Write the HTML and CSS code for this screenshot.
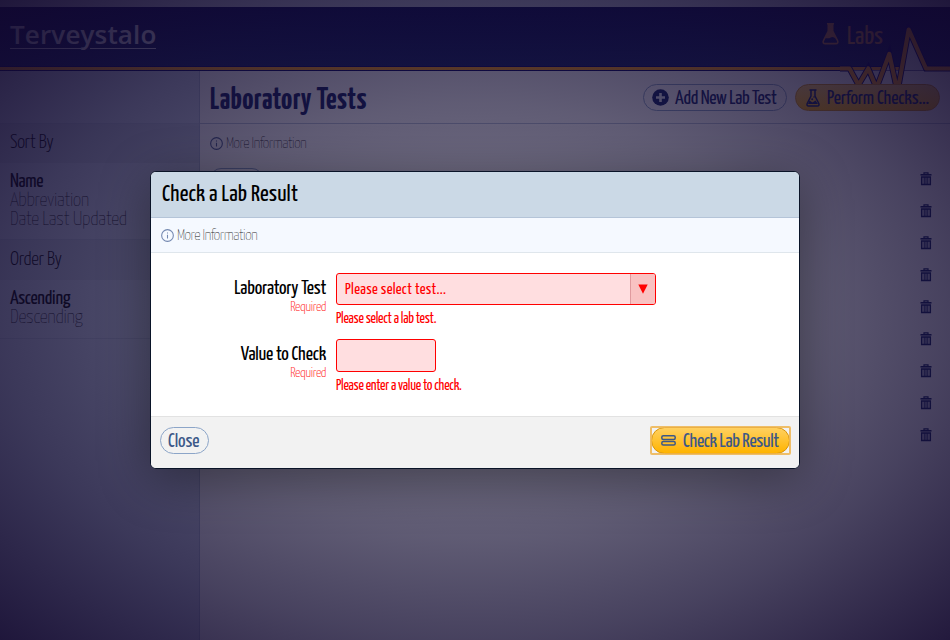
FILE: index.html
```
<!DOCTYPE html>
<html lang="en">
<head>
<meta charset="utf-8">
<title>Laboratory Tests</title>
<link rel="stylesheet" href="styles.css">
</head>
<body>
<svg class="defs" width="0" height="0" aria-hidden="true">
  <symbol id="info" viewBox="0 0 12 12"><circle cx="6" cy="6" r="5.4" fill="none" stroke="currentColor" stroke-width="1"/><path d="M6 5.2V8.700M6 3.200v1" stroke="currentColor" stroke-width="1"/></symbol>
  <symbol id="trash" viewBox="0 0 12 14"><path d="M4 2V.8h4V2" fill="none" stroke="currentColor" stroke-width="1.2"/><path d="M.5 2h11v1.6H.5z" fill="currentColor"/><path d="M1.700 4.900h8.600v7.500H1.700z" fill="none" stroke="currentColor" stroke-width="1.500"/><path d="M4.200 5v7M6 5v7M7.800 5v7" stroke="currentColor" stroke-width="1.100"/></symbol>
</svg>

<div class="page">
  <div class="strip"></div>
  <header class="top">
    <div class="logo">Terveystalo</div>
    <div class="section">
      <svg width="17" height="22" viewBox="0 0 17 22"><path d="M5 .7h7M6.3 1v7.2L1.6 17.3Q.2 20.6 3.4 20.6h10.2q3.2 0 1.8-3.3L10.7 8.2V1" fill="none" stroke="currentColor" stroke-width="1.6"/><path d="M6.3 1h4.4v7.4l3.4 7.3q-3.2-2.6-5.4-1.2-2.2 1.500-5.800.4l3.400-6.500z" fill="currentColor"/></svg>
      <span>Labs</span>
    </div>
    <svg class="pulse" width="110" height="70" viewBox="840 24 110 70">
      <path class="pulse-fill" d="M849 70.500L858 86L868 68L877 87L889 54L898 90L908.500 30L926 70.500Z"/>
      <path class="pulse-edge" d="M838 68.500H849.500L858.500 85L868.300 68.500L876.500 88L889.300 54L897.500 92L908.700 29.500L926 68.500H952"/>
      <path class="pulse-line" d="M838 68.500H849.500L858.500 85L868.300 68.500L876.500 88L889.300 54L897.500 92L908.700 29.500L926 68.500H952"/>
    </svg>
  </header>

  <div class="columns">
    <aside class="side">
      <div class="side-blank"></div>
      <h3>Sort By</h3>
      <ul><li class="on">Name</li><li>Abbreviation</li><li>Date Last Updated</li></ul>
      <h3 class="second">Order By</h3>
      <ul><li class="on">Ascending</li><li>Descending</li></ul>
    </aside>
    <main class="main">
      <div class="titlebar">
        <h1>Laboratory Tests</h1>
        <button class="pill add"><svg width="17" height="17" viewBox="0 0 17 17"><circle cx="8.500" cy="8.500" r="8.300" fill="currentColor"/><path d="M8.500 4v9M4 8.500h9" stroke="#e4e9f2" stroke-width="2.600"/></svg><span>Add New Lab Test</span></button>
        <button class="pill gold perform"><svg width="14" height="18" viewBox="0 0 14 18"><path d="M3.500 1h7M5 1v6L1.200 14.500Q.4 16.900 2.600 16.900h8.800q2.200 0 1.400-2.400L9 7V1" fill="none" stroke="currentColor" stroke-width="1.500"/><path d="M3.500 11.500l3 2 3-2 2.500 3.500h-10z" fill="currentColor"/><circle cx="6.200" cy="10.200" r="1" fill="currentColor"/><circle cx="8" cy="8" r=".8" fill="currentColor"/></svg><span>Perform Checks...</span></button>
      </div>
      <div class="more"><svg width="13" height="13"><use href="#info"/></svg><span>More Information</span></div>
      <div class="list">
        <div class="row"><span class="tag"></span><svg width="12" height="14"><use href="#trash"/></svg></div>
        <div class="row"><svg width="12" height="14"><use href="#trash"/></svg></div>
        <div class="row"><svg width="12" height="14"><use href="#trash"/></svg></div>
        <div class="row"><svg width="12" height="14"><use href="#trash"/></svg></div>
        <div class="row"><svg width="12" height="14"><use href="#trash"/></svg></div>
        <div class="row"><svg width="12" height="14"><use href="#trash"/></svg></div>
        <div class="row"><svg width="12" height="14"><use href="#trash"/></svg></div>
        <div class="row"><svg width="12" height="14"><use href="#trash"/></svg></div>
        <div class="row"><svg width="12" height="14"><use href="#trash"/></svg></div>
      </div>
    </main>
  </div>
</div>

<div class="overlay">
  <section class="modal" role="dialog">
    <h2>Check a Lab Result</h2>
    <div class="modal-more"><svg width="13" height="13"><use href="#info"/></svg><span>More Information</span></div>
    <div class="form">
      <div class="field">
        <div class="label"><label>Laboratory Test</label><small>Required</small></div>
        <div>
          <div class="select"><span>Please select test...</span><i><svg width="10" height="10" viewBox="0 0 10 10"><path d="M.3.500h9.400L5 9.700z" fill="#f00"/></svg></i></div>
          <p class="error">Please select a lab test.</p>
        </div>
      </div>
      <div class="field">
        <div class="label"><label>Value to Check</label><small>Required</small></div>
        <div>
          <div class="input"></div>
          <p class="error">Please enter a value to check.</p>
        </div>
      </div>
    </div>
    <footer>
      <button class="pill close"><span>Close</span></button>
      <button class="pill gold check"><svg width="15" height="11" viewBox="0 0 15 11"><rect x=".8" y=".8" width="13.400" height="3.600" rx="1.500" fill="none" stroke="currentColor" stroke-width="1.500"/><rect x=".8" y="6.500" width="13.400" height="3.600" rx="1.500" fill="none" stroke="currentColor" stroke-width="1.500"/></svg><span>Check Lab Result</span></button>
    </footer>
  </section>
</div>
</body>
</html>
```
FILE: styles.css
```
* { box-sizing: border-box; }
body {
  margin: 0;
  height: 640px;
  overflow: hidden;
  font-family: "Yanone Kaffeesatz", "Open Sans", sans-serif;
  font-stretch: 75%;
  color: #000;
}
h1, h2, h3, p, ul { margin: 0; padding: 0; }
ul { list-style: none; }
svg { display: block; flex: none; }
.defs { position: absolute; }

.page { height: 640px; display: flex; flex-direction: column; background: #fff; }
.strip { height: 7px; background: #cdd5e4; }
.top {
  position: relative;
  height: 64px;
  display: flex;
  justify-content: space-between;
  padding: 0 67px 0 10px;
  background: linear-gradient(#000452, #101e62) 0 0 / 100% 59px no-repeat, linear-gradient(#000060 0 1px, #ffa010 1px 4px, #000060 4px) 0 59px / 100% 5px no-repeat;
}
.logo {
  align-self: flex-start;
  margin-top: 13px;
  height: 29px;
  width: 146px;
  font: 600 26px/29px "Open Sans", sans-serif;
  letter-spacing: .15px;
  color: #dde0ee;
  background: linear-gradient(90deg, #d4d8ea 71px, transparent 71px 80px, #d4d8ea 80px) 0 100% / 100% 1px no-repeat;
}
.section { display: flex; gap: 8px; padding-top: 16px; color: #c8803c; font-size: 26px; font-weight: 400; line-height: 28px; letter-spacing: -.1px; }
.pulse { position: absolute; right: 0; top: 17px; }
.pulse-fill { fill: #e6ebf4; }
.pulse-edge { fill: none; stroke: #000060; stroke-width: 6; }
.pulse-line { fill: none; stroke: #ffa010; stroke-width: 4.200; stroke-linejoin: round; }

.columns { flex: 1; display: flex; }
.side { width: 200px; background: #c8d2e6; border-right: 1px solid #a9b6cf; font-size: 20px; font-weight: 200; letter-spacing: -.35px; }
.side-blank { height: 53px; border-bottom: 1px solid #b4c0d6; }
.side h3 { height: 39px; padding: 8px 10px 0; background: #bcc6d9; font-size: 20px; font-weight: 300; line-height: 22px; }
.side .second { height: 40px; padding-top: 9px; }
.side ul { padding: 9px 10px 10px; border-bottom: 1px solid #b4c0d6; background: #c8d2e6; }
.side ul:last-child { padding-bottom: 11px; }
.side li { line-height: 19px; height: 19px; color: #111; }
.side li.on { font-weight: 400; color: #000; }

.main { flex: 1; background: #fff; }
.titlebar { height: 53px; display: flex; align-items: flex-start; padding: 13px 10px 0; border-bottom: 1px solid #b8c4d8; }
h1 { flex: 1; font-size: 31px; font-weight: 700; line-height: 33px; color: #0f1a60; letter-spacing: .4px; }
.pill {
  height: 27px;
  display: flex;
  align-items: center;
  border: 1px solid #8ca5c8;
  border-radius: 14px;
  background: transparent;
  padding: 0;
  font: 400 20px/25px "Yanone Kaffeesatz", "Open Sans", sans-serif;
  letter-spacing: -.36px;
  color: #3c5888;
  white-space: nowrap;
}
.pill span { padding-top: 1px; }
.gold { background: linear-gradient(#ffd060, #ffb400); border-color: #d89510; }
.add { position: relative; width: 144px; padding-left: 8px; gap: 6px; margin-right: 8px; color: #0f2068; }
.perform { position: relative; width: 145px; padding-left: 10px; gap: 7px; color: #0f2068; letter-spacing: -.16px; }
.more, .modal-more { display: flex; align-items: center; font-size: 16px; font-weight: 200; letter-spacing: -.55px; color: #222; }
.more { height: 39px; padding-left: 10px; gap: 3px; }
.more svg, .modal-more svg { color: #7388b0; }
.more svg { color: #4a5f90; }
.modal-more span { padding-top: 1px; }
.row { height: 32px; display: flex; align-items: center; justify-content: flex-end; padding-right: 18px; color: #0c1c60; }
.tag { width: 53px; height: 22px; margin: 0 auto 0 10px; border: 1px solid #8ca5c8; border-radius: 11px; }

.overlay {
  position: absolute;
  inset: 0;
  height: 640px;
  display: flex;
  justify-content: center;
  padding-top: 171px;
  background: radial-gradient(ellipse farthest-corner, rgba(20, 14, 50, .52), rgba(20, 14, 50, .68) 48%, rgba(20, 13, 50, .78) 70%, rgba(18, 8, 46, .93));
}
.modal {
  width: 650px;
  height: 298px;
  border: 1px solid #0a1428;
  border-radius: 6px;
  overflow: hidden;
  background: #fff;
  box-shadow: 0 10px 50px rgba(0, 0, 0, .4);
  display: flex;
  flex-direction: column;
}
h2 { height: 46px; padding: 9px 11px 0; background: #cbd9e6; border-bottom: 1px solid #b4c4d8; font-size: 24px; font-weight: 400; line-height: 27px; letter-spacing: .1px; }
.modal-more { height: 35px; padding-left: 10px; gap: 3px; background: #f5f9ff; border-bottom: 1px solid #dfe6ec; }
.form { flex: 1; padding: 20px 0 0; }
.field { display: grid; grid-template-columns: 175px 1fr; column-gap: 10px; height: 66px; }
.label { text-align: right; padding-top: 5px; }
.label label { display: block; font-size: 20px; line-height: 21px; letter-spacing: -.22px; }
.label small { display: block; font-size: 14px; line-height: 17px; font-weight: 300; letter-spacing: -.45px; color: #ff3838; }
.select, .input { border: 1px solid #f00; border-radius: 3px; background: #ffdee0; height: 32px; color: #f00; }
.select { width: 320px; display: flex; font-size: 16px; line-height: 31px; letter-spacing: .3px; overflow: hidden; }
.select span { flex: 1; padding-left: 8px; }
.select i { width: 25px; background: #f9c2c2; border-left: 1px solid #e09a9e; display: flex; align-items: center; justify-content: center; }
.input { width: 100px; height: 33px; }
.error { font-size: 15px; line-height: 18px; color: #f00; padding-top: 5px; letter-spacing: -.28px; }
footer { height: 52px; display: flex; justify-content: space-between; padding: 10px 9px 0; background: #f2f2f2; border-top: 1px solid #e2e2e2; }
.close { width: 49px; padding-left: 7px; letter-spacing: -.1px; }
.check { position: relative; width: 139px; padding-left: 9px; gap: 7px; }
.check::after { content: ""; position: absolute; inset: -2px; border: 2px solid #efb550; border-radius: 2px; opacity: .85; }
```
